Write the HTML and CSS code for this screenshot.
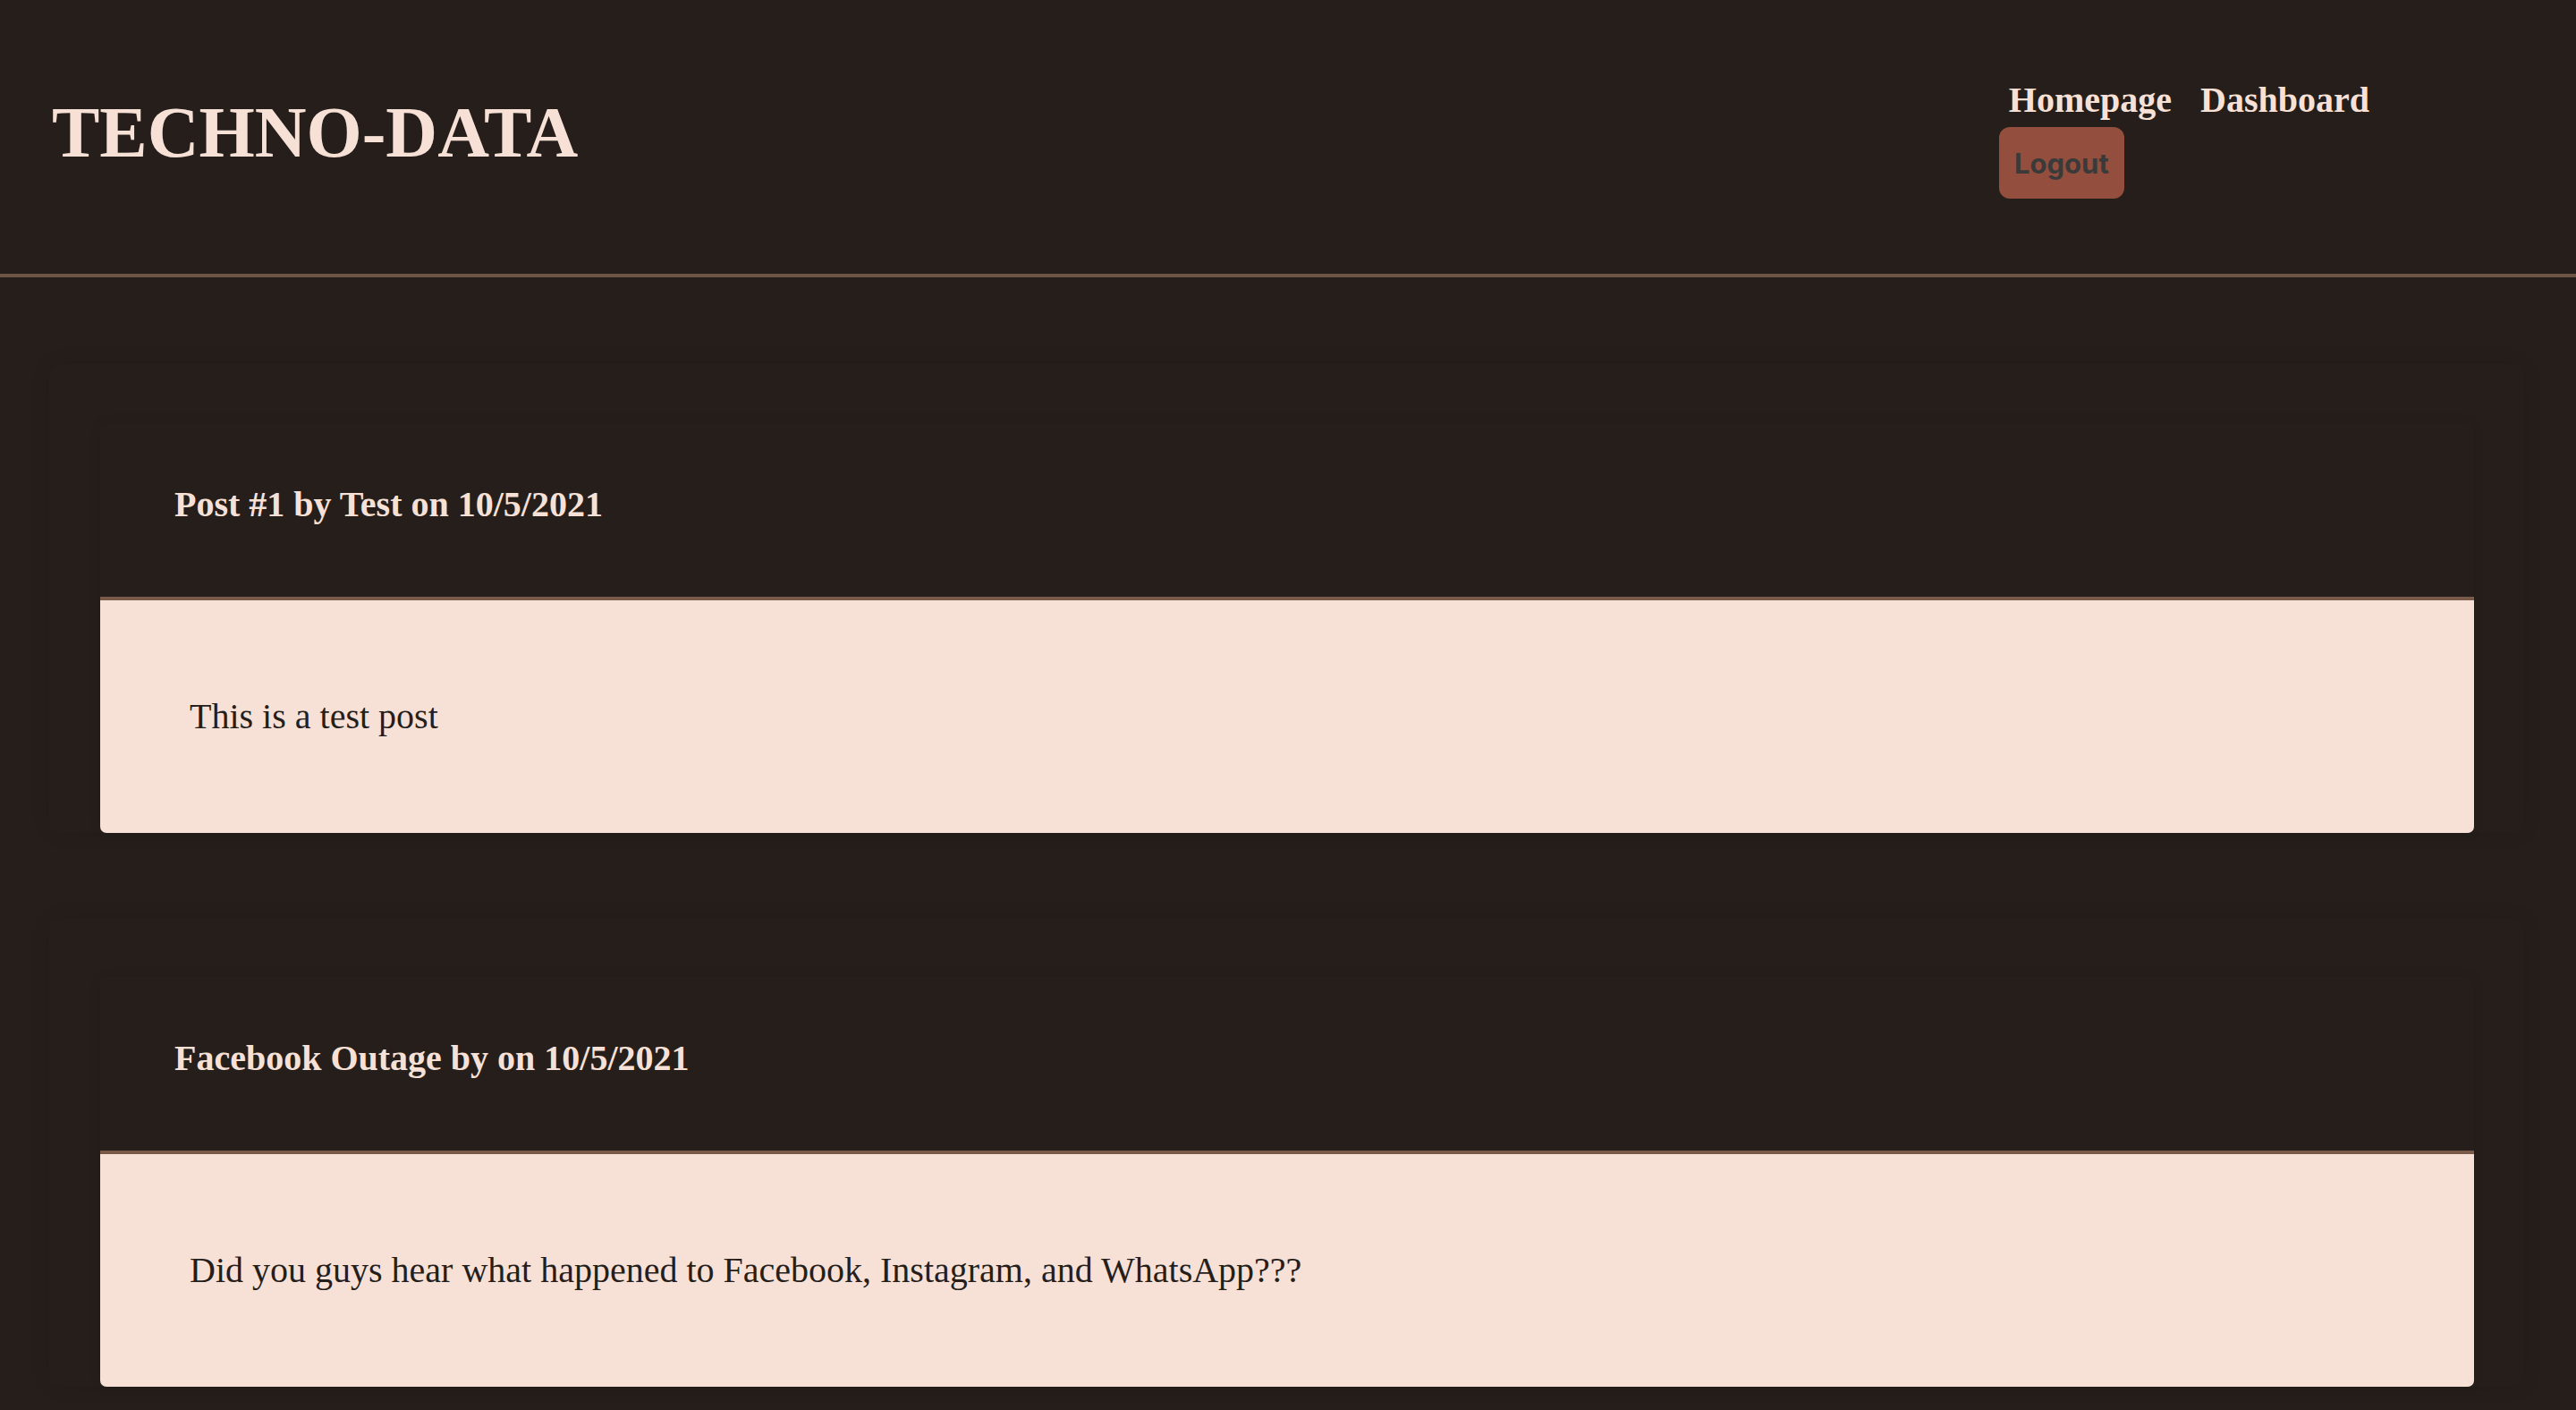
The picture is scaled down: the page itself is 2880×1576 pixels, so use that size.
FILE: index.html
```html
<!DOCTYPE html>
<html lang="en">
<head>
<meta charset="utf-8">
<title>TECHNO-DATA</title>
<link rel="stylesheet" href="styles.css">
</head>
<body>
<header class="site-header">
  <h1 class="brand">TECHNO-DATA</h1>
  <nav class="site-nav">
    <div class="nav-links">
      <a class="nav-link" href="#">Homepage</a>
      <a class="nav-link" href="#">Dashboard</a>
    </div>
    <button class="logout-btn" type="button">Logout</button>
  </nav>
</header>
<main class="posts">
  <section class="post-card">
    <article class="post">
      <div class="post-head">
        <h2 class="post-title">Post #1 by Test on 10/5/2021</h2>
      </div>
      <div class="post-body">
        <p class="post-text">This is a test post</p>
      </div>
    </article>
  </section>
  <section class="post-card">
    <article class="post">
      <div class="post-head">
        <h2 class="post-title">Facebook Outage by on 10/5/2021</h2>
      </div>
      <div class="post-body">
        <p class="post-text">Did you guys hear what happened to Facebook, Instagram, and WhatsApp???</p>
      </div>
    </article>
  </section>
</main>
</body>
</html>
```

FILE: styles.css
```css
html, body {
  margin: 0;
  padding: 0;
  background: #251e1a;
  font-family: "Liberation Serif", "Times New Roman", serif;
  color: #f7e1d7;
}

.site-header {
  height: 306px;
  border-bottom: 4px solid #6d5545;
  display: flex;
  justify-content: space-between;
  align-items: flex-start;
  padding: 0 231px 0 58px;
}

.brand {
  margin: 108px 0 0;
  font-size: 80px;
  line-height: 1;
  font-weight: 700;
  color: #f7e1d7;
}

.site-nav {
  margin-top: 92px;
  display: flex;
  flex-direction: column;
  align-items: flex-start;
  gap: 10px;
}

.nav-links {
  display: flex;
  gap: 32px;
  padding-left: 11px;
}

.nav-link {
  font-size: 40px;
  line-height: 40px;
  font-weight: 700;
  color: #f7e1d7;
  text-decoration: none;
}

.logout-btn {
  width: 140px;
  height: 80px;
  border: none;
  border-radius: 12px;
  background: #944e3d;
  color: #3a3a3a;
  font-family: Inter, "Liberation Sans", sans-serif;
  font-weight: 700;
  font-size: 31px;
  padding: 0;
}

.posts {
  padding: 97px 58px 40px 55px;
}

.post-card {
  padding: 66px 56px 0 57px;
  margin-bottom: 95px;
  border-radius: 14px;
  box-shadow: 0 0 24px rgba(0, 0, 0, 0.07);
}

.post {
  border-radius: 8px;
  box-shadow: 0 0 14px rgba(0, 0, 0, 0.07);
}

.post-head {
  padding: 68px 83px 80px;
}

.post-title {
  margin: 0;
  font-size: 40px;
  line-height: 46px;
  font-weight: 700;
  color: #f7e1d7;
}

.post-body {
  height: 260px;
  background: #f7e1d7;
  border-top: 4px solid #7a5a48;
  border-radius: 0 0 7px 7px;
  display: flex;
  align-items: center;
  padding: 0 100px;
}

.post-text {
  margin: 0;
  font-size: 40px;
  line-height: 46px;
  color: #261e1a;
}
```
